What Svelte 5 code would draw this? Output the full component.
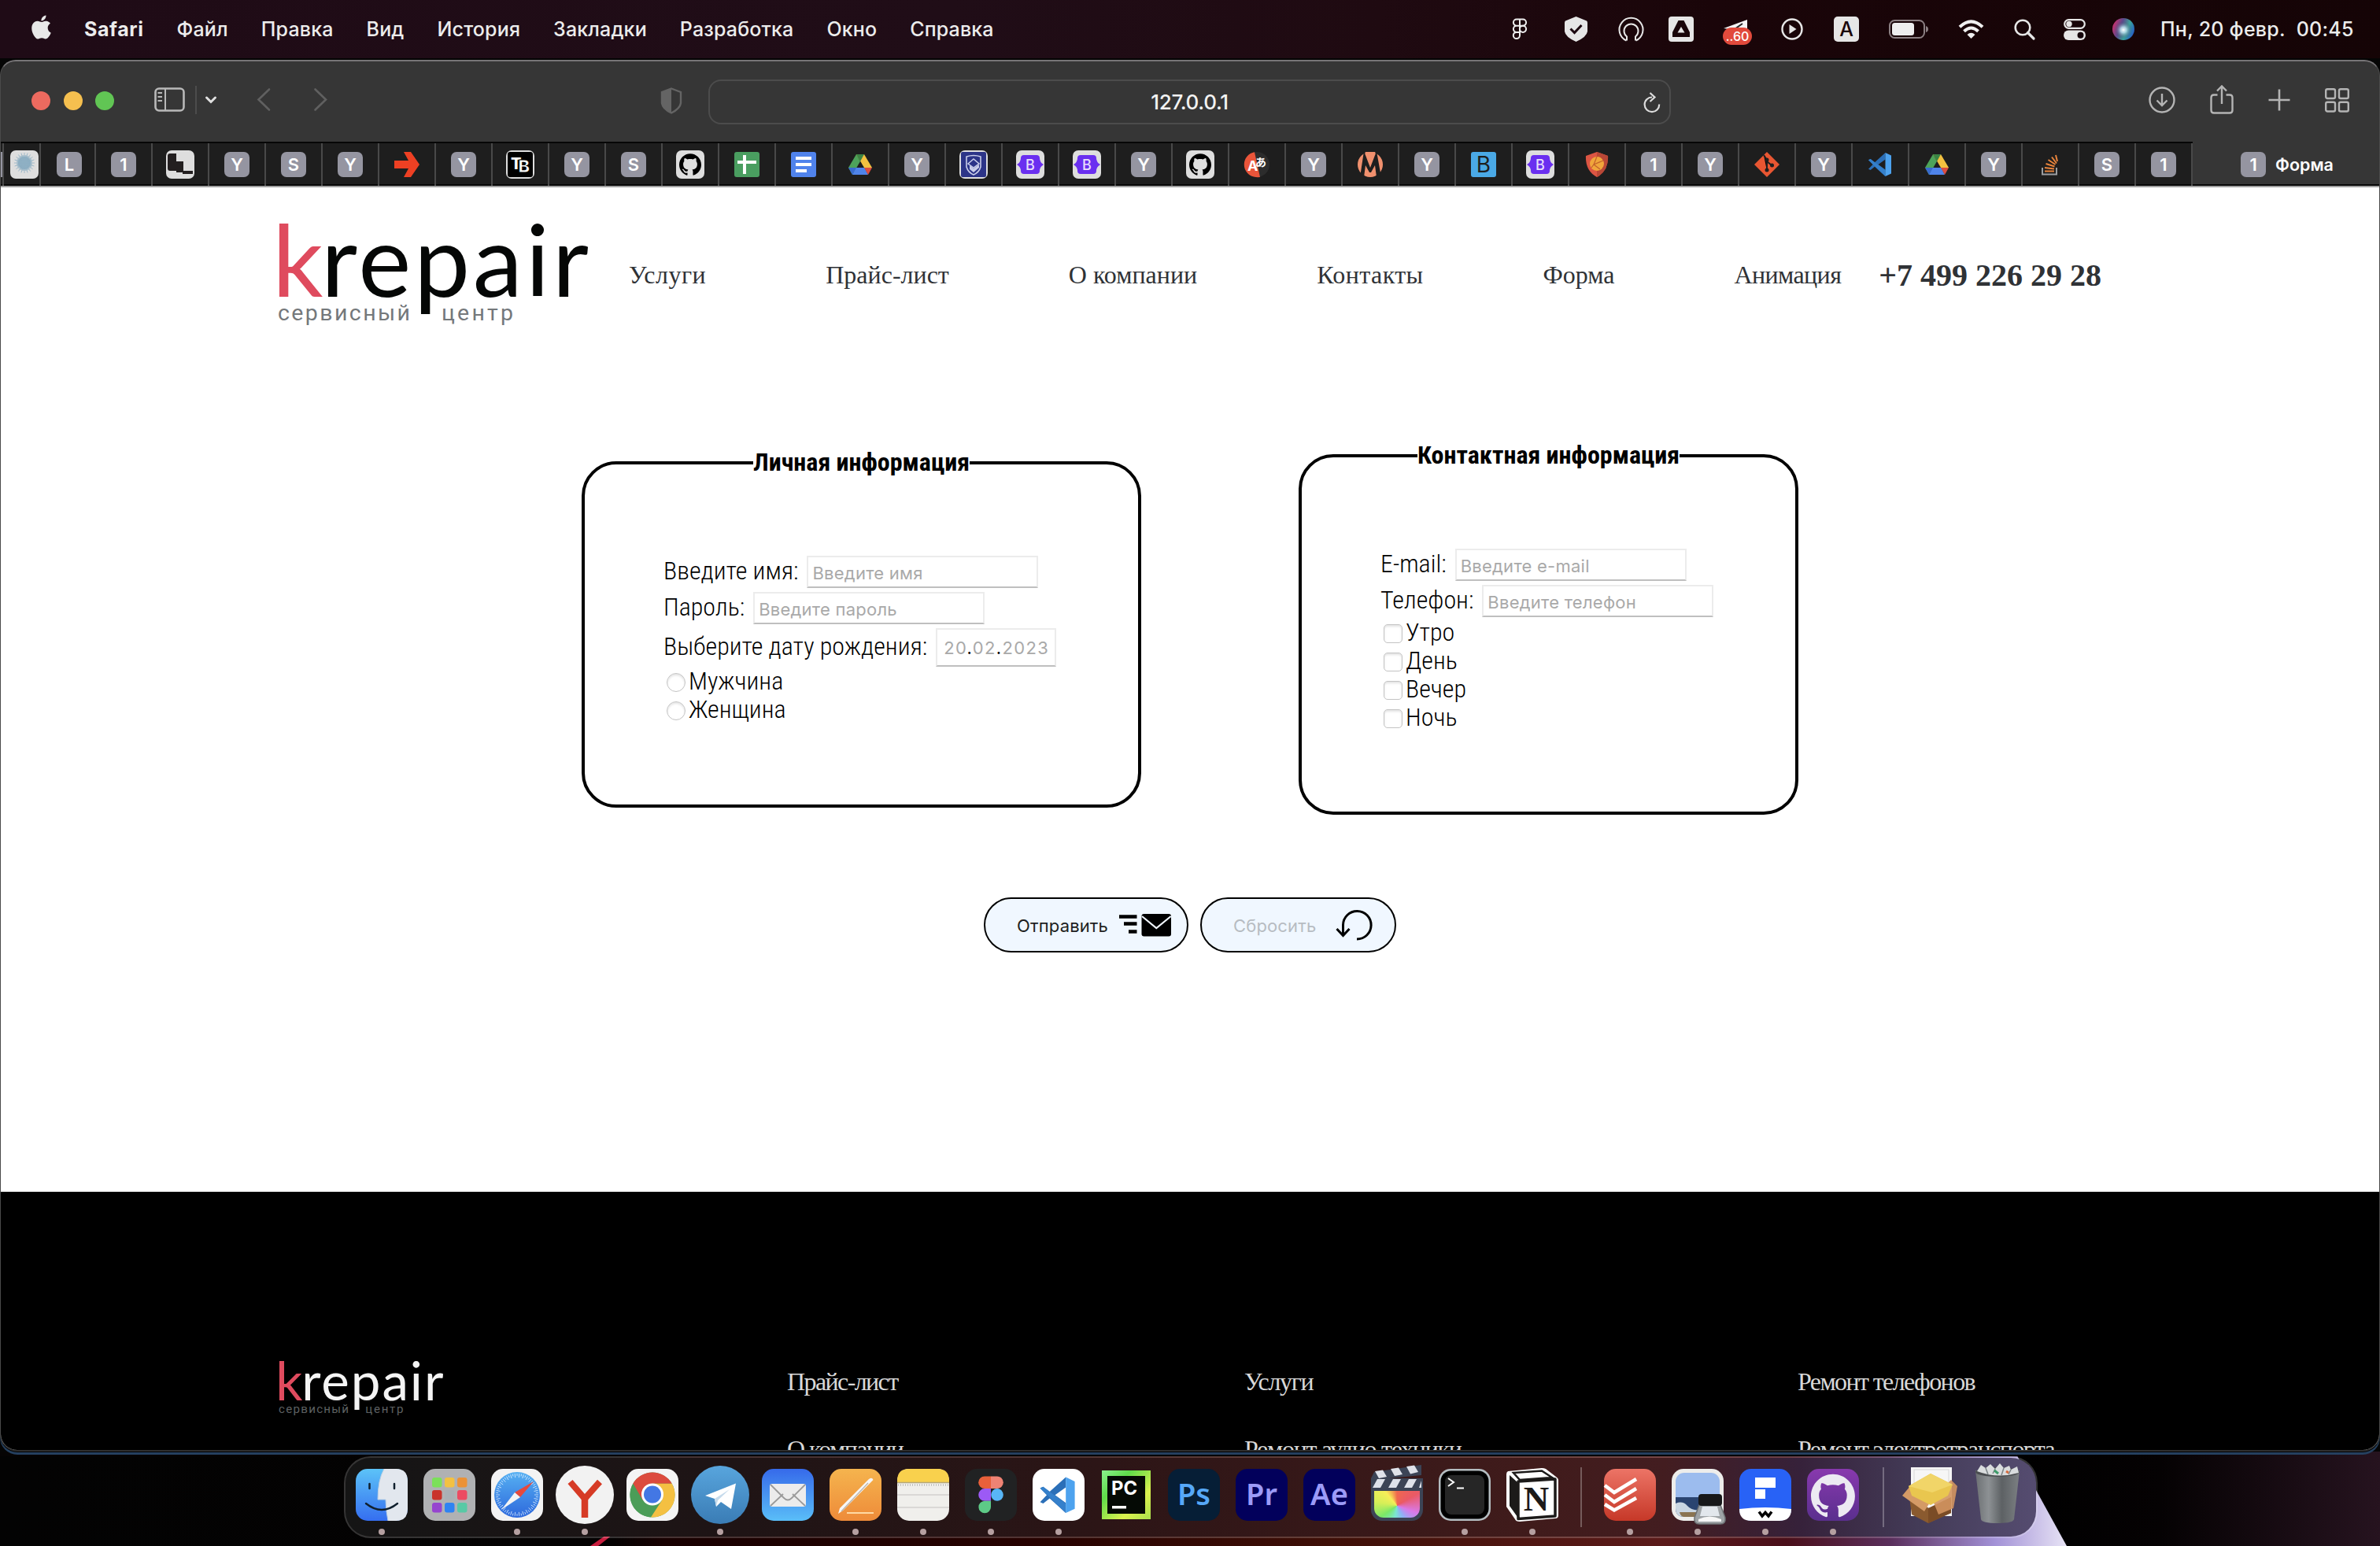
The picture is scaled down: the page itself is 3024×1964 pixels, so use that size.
<script>
  const menus = ['Файл', 'Правка', 'Вид', 'История', 'Закладки', 'Разработка', 'Окно', 'Справка'];
  const statusIcons = ['figma', 'shield', 'pod', 'prism', 'plane', 'play', 'layout', 'battery', 'wifi', 'search', 'control', 'siri'];
  const tabs = [
    '1', 'stairs', 'Y', 'S', 'Y', 'arrow', 'Y', 'tb', 'Y', 'S', 'github', 'sheets', 'docs', 'drive', 'Y', 'crest',
    'bootstrap', 'bootstrap', 'Y', 'github', 'translate', 'Y', 'metro', 'Y', 'bsquare', 'bootstrap', 'guard', '1', 'Y',
    'git', 'Y', 'vscode', 'drive', 'Y', 'stack', 'S', '1'
  ];
  const nav = ['Услуги', 'Прайс-лист', 'О компании', 'Контакты', 'Форма', 'Анимация'];
  const times = ['Утро', 'День', 'Вечер', 'Ночь'];
  const footer = [
    ['Прайс-лист', 'О компании'],
    ['Услуги', 'Ремонт аудио техники'],
    ['Ремонт телефонов', 'Ремонт электротранспорта']
  ];
  const dock = [
    ['finder', true], ['launchpad', false], ['safari', true], ['yandex', true], ['chrome', false], ['telegram', true],
    ['mail', false], ['pages', true], ['notes', true], ['figma', true], ['vscode', true], ['pycharm', false],
    ['ps', false], ['pr', false], ['ae', false], ['clapper', false], ['terminal', true], ['notion', true],
    ['sep', false], ['todoist', true], ['preview', true], ['fw', true], ['github', true],
    ['sep', false], ['box', false], ['trash', false]
  ];
  const adobe = {
    ps: { bg: '#061e36', fg: '#56a8f8', t: 'Ps' },
    pr: { bg: '#02005b', fg: '#9c9bf7', t: 'Pr' },
    ae: { bg: '#02005b', fg: '#9c9bf7', t: 'Ae' }
  };
  const pads = ['#7be05a', '#f3c142', '#ec9236', '#c9332b', '#a9b0b5', '#ec4a62', '#9645cf', '#2f83f2', '#58c9a5'];
  const ticks = Array.from({ length: 60 }, (_, i) => i * 6);
  const catPath =
    'M12 .297c-6.63 0-12 5.373-12 12 0 5.303 3.438 9.8 8.205 11.385.6.113.82-.258.82-.577 0-.285-.01-1.04-.015-2.04-3.338.724-4.042-1.61-4.042-1.61C4.422 18.07 3.633 17.7 3.633 17.7c-1.087-.744.084-.729.084-.729 1.205.084 1.838 1.236 1.838 1.236 1.07 1.835 2.809 1.305 3.495.998.108-.776.417-1.305.76-1.605-2.665-.3-5.466-1.332-5.466-5.93 0-1.31.465-2.38 1.235-3.22-.135-.303-.54-1.523.105-3.176 0 0 1.005-.322 3.3 1.23.96-.267 1.98-.399 3-.405 1.02.006 2.04.138 3 .405 2.28-1.552 3.285-1.23 3.285-1.23.645 1.653.24 2.873.12 3.176.765.84 1.23 1.91 1.23 3.22 0 4.61-2.805 5.625-5.475 5.92.42.36.81 1.096.81 2.22 0 1.606-.015 2.896-.015 3.286 0 .315.21.69.825.57C20.565 22.092 24 17.592 24 12.297c0-6.627-5.373-12-12-12';
</script>

{#snippet logo(dark)}
  <svg class="logo" class:dark viewBox="0 0 394 132">
    <text class="brand" y="96" font-size="127"><tspan class="k" x="-8" textLength="60">k</tspan><tspan x="54" textLength="340">repair</tspan></text>
    <g class="tag" font-size="28.500">
      <text x="-1" y="126" textLength="168">сервисный</text>
      <text x="207" y="126" textLength="91">центр</text>
    </g>
  </svg>
{/snippet}

{#snippet vs()}
  <path d="M22.5 1 9 13.2 3.6 9 1 10.2 6.6 16 1 21.8 3.6 23 9 18.8 22.5 31 Z M22.5 9.5V22.5L13.5 16Z" fill="#2b6fb8" fill-rule="evenodd" />
  <path d="M1 10.2 3.6 9 22.5 23.2V31Z" fill="#3580cb" />
  <path d="M22.5 1 30 4.6V27.4L22.5 31Z" fill="#4da2ee" />
{/snippet}

{#snippet favicon(name)}
  {#if name.length === 1}
    <span class="letter">{name}</span>
  {:else}
    <svg class="fav" viewBox="0 0 32 32">
      {#if ['stairs', 'github', 'bootstrap', 'crest', 'tb', 'burst'].includes(name)}
        <rect x="-2" y="-2" width="36" height="36" rx="7" fill="#dedede" />
      {/if}
      {#if name === 'stairs'}
        <path d="M0 5q0-3 3-3h8v10h9v14h-9v-2h-8q-3 0-3-3z" fill="#231f20" />
        <rect x="19" y="24" width="13" height="4" fill="#231f20" />
      {:else if name === 'burst'}
        <circle cx="16" cy="14" r="8" fill="#86a8bd" />
        {#each ticks as t}
          <path d="M16 14V{t % 18 === 0 ? 1 : 4}" stroke="#8fb0c4" stroke-width=".8" transform="rotate({t} 16 14)" />
        {/each}
      {:else if name === 'arrow'}
        <path d="M12 0 21 0 32 16 21 32H12L18 21H0V11H18Z" fill="#ee4023" />
      {:else if name === 'tb'}
        <rect width="32" height="32" rx="3" fill="#000" />
        <text x="4" y="22" font-size="20" font-weight="800" fill="#fff">T</text>
        <text x="13.500" y="26" font-size="22" font-weight="800" fill="#fff" stroke="#000" stroke-width=".8">B</text>
      {:else if name === 'github'}
        <g transform="translate(2 2) scale(1.167)"><path d={catPath} fill="#000" /></g>
      {:else if name === 'sheets'}
        <rect width="32" height="32" rx="3" fill="#4a9e60" />
        <path d="M4 13H28M13 4V28" stroke="#fff" stroke-width="4" />
      {:else if name === 'docs'}
        <rect width="32" height="32" rx="3" fill="#5083ec" />
        <path d="M6 8H26M6 16H26M6 24H20" stroke="#fff" stroke-width="4" />
      {:else if name === 'drive'}
        <path d="M11 3 16 12 6 29 1 20Z" fill="#4da35a" />
        <path d="M11 3H21L31 20H21Z" fill="#f4c140" />
        <path d="M11 3H21L16 12Z" fill="#3a8344" />
        <path d="M10.5 20H21.500L26 29H6Z" fill="#4f84ea" />
        <path d="M1 20H11L6 29Z" fill="#386bd0" />
        <path d="M21 20H31L26 29Z" fill="#dc4d40" />
      {:else if name === 'crest'}
        <rect width="32" height="32" rx="2" fill="#2c3488" />
        <path d="M7 6q9-3 18 0v13q-2 7-9 10q-7-3-9-10z" fill="none" stroke="#c9cdea" stroke-width="1.600" />
        <path d="M9 15l7-6 7 6-7 5z" fill="none" stroke="#c9cdea" stroke-width="1.500" />
        <path d="M11 17l5 4 7-5v4l-7 6-5-4z" fill="#c9cdea" />
      {:else if name === 'bootstrap'}
        <path d="M8 4H24q4 0 4 4 0 5 5 8-5 3-5 8 0 4-4 4H8q-4 0-4-4 0-5-5-8 5-3 5-8 0-4 4-4Z" fill="#6a2ff0" />
        <text x="16" y="22.500" font-size="18" font-weight="500" fill="#e8defc" text-anchor="middle">B</text>
      {:else if name === 'translate'}
        <circle cx="16" cy="16" r="16" fill="#2c2c2c" />
        <path d="M13 .2 20 32Q16 32.500 12 31.500A16 16 0 0 1 13 .2Z" fill="#ea553a" />
        <text x="4" y="24" font-size="18" font-weight="700" fill="#fff">A</text>
        <text class="cjk" x="14" y="18" font-size="14" font-weight="700" fill="#fff">あ</text>
      {:else if name === 'metro'}
        <circle cx="16" cy="16" r="16" fill="#f0906e" />
        <path d="M8 -1 16 20 24 -1 30 32H24L22 17 17 26H15L10 17 8 32H3Z" fill="#1e1e1e" />
        <path d="M9.500 0H22.500L16 17Z" fill="#f0906e" />
      {:else if name === 'bsquare'}
        <rect width="32" height="32" rx="3" fill="#4aa9e6" />
        <text x="16" y="26" font-size="28" fill="#1e1e1e" text-anchor="middle">B</text>
      {:else if name === 'guard'}
        <path d="M16 0 30 5Q31 24 16 32Q1 24 2 5Z" fill="#dc5543" />
        <path d="M16 0 30 5Q31 24 16 32Z" fill="#b94736" />
        <circle cx="16" cy="15" r="9" fill="#f0a63b" />
        <path d="M16 6 12 16 20 22M12 16 24 11M9 20 12 16" stroke="#c2602a" stroke-width="1.200" fill="none" />
      {:else if name === 'git'}
        <path d="M16 0 32 16 16 32 0 16Z" fill="#e85632" />
        <path d="M12 4 16 10V24M16 12 22 17" stroke="#1e1e1e" stroke-width="2" />
        <circle cx="16" cy="10" r="2.500" fill="#1e1e1e" /><circle cx="16" cy="23" r="2.500" fill="#1e1e1e" /><circle cx="22.500" cy="17" r="2.500" fill="#1e1e1e" />
      {:else if name === 'vscode'}
        {@render vs()}
      {:else if name === 'stack'}
        <path d="M6 20V28.500H24V20" stroke="#9c9ea1" stroke-width="2" fill="none" />
        <path d="M9 24.500H21M9 20 21 21.500M10.500 15 21.500 18.500M13.500 10 22.500 16M18 6.500 24 14.500M23 4 25 12" stroke="#e8843c" stroke-width="2" />
      {/if}
    </svg>
  {/if}
{/snippet}

{#snippet status(name)}
  {#if name === 'figma'}
    <svg width="20" height="28" viewBox="0 0 20 28" fill="none" stroke="#eee" stroke-width="2">
      <path d="M10 1.500H6a4.100 4.100 0 0 0 0 8.200h4zM10 1.500h4a4.100 4.100 0 0 1 0 8.200h-4zM10 9.700H6a4.100 4.100 0 0 0 0 8.200h4zM10 17.900H6a4.100 4.100 0 1 0 4 4.200z" />
      <circle cx="14" cy="13.800" r="4.100" />
    </svg>
  {:else if name === 'shield'}
    <svg width="29" height="32" viewBox="0 0 29 32">
      <path d="M14.500 0 28 5.500Q29 6 29 8V19Q28 26 14.500 32Q1 26 0 19V8Q0 6 1 5.500Z" fill="#e6e6e6" />
      <path d="M7.500 15.500 12.500 20.500 21.500 11" stroke="#1c0810" stroke-width="3" fill="none" />
    </svg>
  {:else if name === 'pod'}
    <svg width="33" height="32" viewBox="0 0 33 32" fill="none" stroke="#e6e6e6" stroke-width="2">
      <path d="M10.500 30.500A15 15 0 1 1 22.500 30.500M11 30.500V25.500A9 9 0 1 1 22 25.500V30.500" />
    </svg>
  {:else if name === 'prism'}
    <svg width="32" height="32" viewBox="0 0 32 32">
      <rect width="32" height="32" rx="4" fill="#e6e6e6" />
      <path d="M12.500 5H19.500L27 20V26H5V20Z" fill="#190509" /><path d="M16 13 20.500 20.500H11.500Z" fill="#e6e6e6" />
    </svg>
  {:else if name === 'plane'}
    <svg width="38" height="34" viewBox="0 0 38 34">
      <path d="M31 1V16L1 12Z" fill="#f4f4f4" /><path d="M25 6 12 15" stroke="#222" stroke-width="2" />
      <rect x="0" y="11" width="37" height="22" rx="11" fill="#e14a3c" />
      <text x="18.500" y="28" font-size="16" fill="#fff" text-anchor="middle">..60</text>
    </svg>
  {:else if name === 'play'}
    <svg width="28" height="28" viewBox="0 0 28 28">
      <circle cx="14" cy="14" r="12.500" fill="none" stroke="#e6e6e6" stroke-width="2.400" /><path d="M10.500 8 19.500 14 10.500 20Z" fill="#e6e6e6" />
    </svg>
  {:else if name === 'layout'}
    <svg width="32" height="32" viewBox="0 0 32 32">
      <rect width="32" height="32" rx="5" fill="#e6e6e6" /><text x="16" y="25" font-size="25" fill="#1a060a" text-anchor="middle">A</text>
    </svg>
  {:else if name === 'battery'}
    <svg width="51" height="24" viewBox="0 0 51 24">
      <rect x="1" y="1" width="44" height="22" rx="6.500" fill="none" stroke="#8b7f82" stroke-width="2" />
      <rect x="4" y="4" width="28" height="16" rx="3.500" fill="#eee" /><path d="M47 8Q50 9 50 12T47 16Z" fill="#8b7f82" />
    </svg>
  {:else if name === 'wifi'}
    <svg width="33" height="25" viewBox="0 0 33 25" fill="none" stroke="#f0f0f0" stroke-width="4">
      <path d="M2 9.200Q16.500-4.500 31 9.200" /><path d="M7.500 14.700Q16.500 6.300 25.500 14.700" /><path d="M16.500 24 11.500 19Q16.500 14.500 21.500 19Z" fill="#f0f0f0" stroke="none" />
    </svg>
  {:else if name === 'search'}
    <svg width="27" height="27" viewBox="0 0 27 27" fill="none" stroke="#e6e6e6" stroke-width="2.600">
      <circle cx="11" cy="11" r="9.300" /><path d="M17.500 17.500 25 25" stroke-width="3.200" stroke-linecap="round" />
    </svg>
  {:else if name === 'control'}
    <svg width="28" height="27" viewBox="0 0 28 27">
      <rect x="1.200" y="1.200" width="25.600" height="10.600" rx="5.300" fill="none" stroke="#e6e6e6" stroke-width="2.200" /><circle cx="7" cy="6.500" r="3.700" fill="#e6e6e6" />
      <rect x="0" y="14.500" width="28" height="12.500" rx="6.200" fill="#e6e6e6" /><circle cx="21.500" cy="20.700" r="4" fill="#14040a" />
    </svg>
  {:else if name === 'siri'}
    <svg width="28" height="28" viewBox="0 0 28 28">
      <defs>
        <linearGradient id="siri" x1="0" y1=".3" x2="1" y2=".7"><stop offset="0" stop-color="#d0306c" /><stop offset=".35" stop-color="#5b4b8c" /><stop offset=".65" stop-color="#3aa39a" /><stop offset="1" stop-color="#2456c8" /></linearGradient>
        <radialGradient id="glow"><stop offset="0" stop-color="#fff" /><stop offset=".35" stop-color="#bfe4f2" stop-opacity=".8" /><stop offset="1" stop-color="#3a3a5c" stop-opacity="0" /></radialGradient>
      </defs>
      <circle cx="14" cy="14" r="14" fill="url(#siri)" /><circle cx="14" cy="15" r="11" fill="url(#glow)" />
    </svg>
  {/if}
{/snippet}

{#snippet app(name)}
  <svg class="app" viewBox="0 0 66 66">
    {#if name === 'finder'}
      <rect width="66" height="66" rx="15" fill="url(#finder)" />
      <path d="M36 0H51Q66 0 66 15V51Q66 66 51 66H41Q38 52 38 39H28Q28 14 36 0Z" fill="#e2e7ee" />
      <path d="M36 0Q28 14 28 39H38Q38 52 41 66" fill="none" stroke="#bcd0e4" stroke-width="1" />
      <path d="M17.500 19V25M49 19V25" stroke="#10202e" stroke-width="2.500" stroke-linecap="round" />
      <path d="M13 44Q33 60 53 44" fill="none" stroke="#10202e" stroke-width="2.400" stroke-linecap="round" />
    {:else if name === 'launchpad'}
      <rect width="66" height="66" rx="15" fill="#b0b1b3" />
      {#each pads as c, i}
        <rect x={11 + (i % 3) * 16} y={11 + Math.floor(i / 3) * 16} width="12.500" height="12.500" rx="3" fill={c} />
      {/each}
    {:else if name === 'safari'}
      <rect width="66" height="66" rx="15" fill="#f3f3f3" />
      <circle cx="33" cy="33" r="29" fill="url(#sky)" />
      {#each ticks as t}
        <path d="M33 6V{t % 12 === 0 ? 9 : 11}" stroke="#d8ecff" stroke-width=".8" transform="rotate({t} 33 33)" />
      {/each}
      <path d="M54 16 37 36 30 30Z" fill="#e6493d" /><path d="M13 52 30 30 37 36Z" fill="#f4f4f4" />
    {:else if name === 'yandex'}
      <circle cx="33" cy="33" r="37" fill="#f2f2f2" />
      <path d="M14.500 16.500 33 38 52 16.500" fill="none" stroke="#d63b26" stroke-width="8" /><path d="M33 35V62" stroke="#d63b26" stroke-width="8.500" />
    {:else if name === 'chrome'}
      <rect width="66" height="66" rx="15" fill="#f4f4f4" />
      <circle cx="33" cy="33" r="28.500" fill="#4b9d58" />
      <path d="M8.300 18.700A28.500 28.500 0 0 1 57.700 18.700H33L20.500 40Z" fill="#dc4b3e" />
      <path d="M57.700 18.700A28.500 28.500 0 0 1 31 61.500L45 40 33 18.700Z" fill="#f4c042" />
      <path d="M8.300 18.700 20.600 40 31 61.500A28.500 28.500 0 0 1 8.300 18.700Z" fill="#4b9d58" />
      <circle cx="33" cy="32.500" r="14" fill="#fff" /><circle cx="33" cy="32.500" r="11" fill="#4377e4" />
    {:else if name === 'telegram'}
      <circle cx="33" cy="33" r="37" fill="url(#tg)" />
      <path d="M14 34 53 18.500 47 51 34 42 28 48 26 38Z" fill="#fff" /><path d="M26 38 45 26 30 40 28 48Z" fill="#c6dbec" />
    {:else if name === 'mail'}
      <rect width="66" height="66" rx="15" fill="url(#mail)" />
      <rect x="10" y="19" width="46" height="29" rx="3" fill="#ececec" />
      <path d="M11 47 27 32M55 47 39 32M11 20 28 37Q33 42 38 37L55 20" fill="none" stroke="#9a9a9a" stroke-width="1.800" />
    {:else if name === 'pages'}
      <rect width="66" height="66" rx="15" fill="url(#orange)" />
      <path d="M22 56H56" stroke="#ffd9a4" stroke-width="2" />
      <path d="M50 13Q54 10 55.500 14L17 53 11 57 13 50Z" fill="#f7f7f7" /><path d="M49 18 15 54" stroke="#b9b2aa" stroke-width="1.200" />
    {:else if name === 'notes'}
      <rect width="66" height="66" rx="15" fill="#f0efec" />
      <path d="M0 17V15Q0 0 15 0H51Q66 0 66 15V17Z" fill="#f9d14d" />
      <path d="M0 17.500H66" stroke="#b4a77c" stroke-width="1.500" /><path d="M1 20.500H65" stroke="#b0b0ae" stroke-width="2" stroke-dasharray="1 2" />
      <path d="M0 33H66M0 49H66" stroke="#d2d1ce" stroke-width="1.400" />
    {:else if name === 'figma'}
      <rect width="66" height="66" rx="15" fill="#212223" />
      <path d="M33 9.500H25a7.800 7.800 0 0 0 0 15.600h8z" fill="#e9603a" /><path d="M33 9.500h8a7.800 7.800 0 0 1 0 15.600h-8z" fill="#ef8374" />
      <path d="M33 25.100H25a7.800 7.800 0 0 0 0 15.600h8z" fill="#9c5af5" /><circle cx="41" cy="32.900" r="7.800" fill="#58b6f7" />
      <path d="M33 40.700H25a7.800 7.800 0 1 0 8 7.800z" fill="#5dca87" />
    {:else if name === 'vscode'}
      <rect width="66" height="66" rx="15" fill="#fff" /><g transform="translate(8 9) scale(1.520)">{@render vs()}</g>
    {:else if name === 'pycharm'}
      <rect x="2" y="2" width="62" height="62" fill="url(#pc)" /><rect x="9" y="9" width="48" height="48" fill="#050a05" />
      <text x="14" y="33" font-size="24" font-weight="700" fill="#fff" textLength="33" lengthAdjust="spacingAndGlyphs">PC</text><rect x="15" y="47" width="18" height="3.500" fill="#fff" />
    {:else if adobe[name]}
      <rect width="66" height="66" rx="15" fill={adobe[name].bg} />
      <text class="adobe" x="33" y="46" font-size="38" font-weight="600" fill={adobe[name].fg} text-anchor="middle">{adobe[name].t}</text>
    {:else if name === 'clapper'}
      <rect y="12" width="66" height="54" rx="14" fill="#3c4456" /><rect y="12" width="66" height="14" fill="#3c4456" />
      <path d="M0 12 4 4 64-5V8L2 14Z" fill="#3c4456" />
      <path d="M5 3 15 1.500 20 10 10 12ZM25 0 35-1.500 40 7 30 9ZM45-3 55-4.500 60 4 50 6.500ZM8 13H18L12 24H2ZM28 13H38L32 24H22ZM48 13H58L52 24H42ZM64 15V24H61Z" fill="#dfe2ea" />
      <foreignObject x="4" y="28" width="58" height="34"><div class="wheel"></div></foreignObject>
    {:else if name === 'terminal'}
      <rect width="66" height="66" rx="15" fill="#b4bcc0" /><rect x="2.500" y="2.500" width="61" height="61" rx="13" fill="#000" /><rect x="8" y="8" width="50" height="50" rx="8" fill="#262626" />
      <path d="M12 12 19 17 12 22" stroke="#fff" stroke-width="2" fill="none" /><path d="M23 24.500H32" stroke="#fff" stroke-width="2" />
    {:else if name === 'notion'}
      <path d="M2 3Q0 4 0 7V48L11 64Q12 67 17 67L62 63Q66 63 66 59V14Q66 12 63 10L50 0Q48-1 45-1Z" fill="#fff" />
      <path d="M9 5 45 2.500 58 11 17 14Z" fill="#fff" stroke="#1c1a19" stroke-width="2.500" />
      <path d="M4 8 14 17V61L4 47Z" fill="#1c1a19" /><path d="M15 16 62 13V60L15 63.500Z" fill="#fff" stroke="#1c1a19" stroke-width="3.500" stroke-linejoin="round" />
      <text class="serif" x="38" y="53" font-size="45" font-weight="700" fill="#1c1a19" text-anchor="middle">N</text>
    {:else if name === 'todoist'}
      <rect width="66" height="66" rx="15" fill="url(#todo)" />
      <path d="M1 21 13 30 41 13M1 33 13 42 41 25M1 45 13 52.500 41 37" stroke="#fff" stroke-width="4.500" fill="none" />
    {:else if name === 'preview'}
      <rect width="66" height="66" rx="15" fill="#ededeb" /><rect x="5" y="5" width="56" height="56" rx="11" fill="#9cbcee" />
      <path d="M5 36H61V50Q61 61 50 61H16Q5 61 5 50Z" fill="#2a4470" /><path d="M5 44Q14 40 20 47T38 52V61H16Q5 61 5 50Z" fill="#c9d6e2" /><path d="M10 55H34V61H15Q11 60 10 55Z" fill="#8a7452" />
      <path d="M35 46 29 62Q28 70 35 70H62Q69 70 68 62L62 46Z" fill="#9ea3a6" stroke="#6d7174" stroke-width="1.500" /><path d="M39 48 36 60H61L58 48Z" fill="#e2e7ec" /><path d="M34 64Q48 57 63 64V67H34Z" fill="#f6f6f6" />
      <rect x="34" y="32" width="30" height="15" rx="4" fill="#17181a" />
    {:else if name === 'fw'}
      <rect width="66" height="66" rx="15" fill="#2862f6" />
      <path d="M0 51Q33 47 66 51Q66 66 51 66H15Q0 66 0 51Z" fill="#fff" /><path d="M20 11H46V24H33V38H20V26H33V24H20Z" fill="#fff" /><path d="M20 24.700H33" stroke="#2862f6" stroke-width="1.500" />
      <path d="M25 54.500 29 60 33 55.500 37 60 41 54.500" stroke="#000" stroke-width="3.500" fill="none" />
    {:else if name === 'github'}
      <rect width="66" height="66" rx="15" fill="url(#gh)" /><g transform="translate(5 6) scale(2.330)"><path d={catPath} fill="#eceaf2" /></g>
    {:else if name === 'box'}
      <rect x="9" y="-2" width="52" height="62" fill="#f6f6f6" /><rect x="13" y="1" width="44" height="40" fill="none" stroke="#d8d8d8" />
      <path d="M7 36 32 50 60 36V56L31 69 10 58Z" fill="#8a5a2f" /><path d="M31 50V69L60 56V36Z" fill="#7a4c26" />
      <path d="M-2 34 8 22 36 38 26 54Z" fill="#d49a66" /><path d="M36 38 60 14 68 22 63 50 44 58Z" fill="#d39560" opacity=".9" />
      <path d="M6 22 34 6 62 20 56 34 34 46 10 34Z" fill="#e9c64f" /><path d="M34 6 62 20 36 30 6 22Z" fill="#f1d568" />
    {:else if name === 'trash'}
      <path d="M5 2 61 2 54 64Q53 69 33 69T12 64Z" fill="url(#bin)" />
      <ellipse cx="33" cy="4" rx="28" ry="6" fill="#4a4d50" />
      <path d="M7 3 12-5 18-1 24-6 30 0 36-7 41-1 48-4 50 1 58-3 60 5Q33 13 7 3Z" fill="#d9dcdd" />
      <path d="M18-1 21 7M30 0 27 6M41-1 38 8M50 1 47 7" stroke="#7b8386" stroke-width="1.500" /><path d="M29 2 34 6" stroke="#3f9b6a" stroke-width="3" /><path d="M44 3 47 5" stroke="#d66a3c" stroke-width="3" />
    {/if}
  </svg>
{/snippet}

<div class="desktop">
  <svg class="defs" width="0" height="0">
    <defs>
      <linearGradient id="finder" x2="0" y2="1"><stop offset="0" stop-color="#5cc3f8" /><stop offset="1" stop-color="#356ef0" /></linearGradient>
      <linearGradient id="sky" x2="0" y2="1"><stop offset="0" stop-color="#56b0f2" /><stop offset="1" stop-color="#2d68dc" /></linearGradient>
      <linearGradient id="tg" x2="0" y2="1"><stop offset="0" stop-color="#58a5dd" /><stop offset="1" stop-color="#3a7cb5" /></linearGradient>
      <linearGradient id="mail" x2="0" y2="1"><stop offset="0" stop-color="#366aea" /><stop offset="1" stop-color="#5abef8" /></linearGradient>
      <linearGradient id="orange" x2="0" y2="1"><stop offset="0" stop-color="#f5b44e" /><stop offset="1" stop-color="#ee8b39" /></linearGradient>
      <linearGradient id="pc" x2="1" y2="1"><stop offset="0" stop-color="#8af08f" /><stop offset=".3" stop-color="#5fdc4a" /><stop offset=".7" stop-color="#dcf24e" /><stop offset="1" stop-color="#a9e04c" /></linearGradient>
      <linearGradient id="todo" x2="0" y2="1"><stop offset="0" stop-color="#ec7466" /><stop offset="1" stop-color="#c63828" /></linearGradient>
      <linearGradient id="gh" x2="0" y2="1"><stop offset="0" stop-color="#8839ae" /><stop offset="1" stop-color="#5a2f8e" /></linearGradient>
      <linearGradient id="bin"><stop offset="0" stop-color="#6c7073" /><stop offset=".3" stop-color="#8d9194" /><stop offset=".6" stop-color="#5d6164" /><stop offset="1" stop-color="#7c8083" /></linearGradient>
    </defs>
  </svg>

  <header class="menubar">
    <svg class="apple" viewBox="2 0 20 24"><path fill="#e8e8e8" d="M12.152 6.896c-.948 0-2.415-1.078-3.960-1.040-2.040.027-3.910 1.183-4.961 3.014-2.117 3.675-.546 9.103 1.519 12.090 1.013 1.454 2.208 3.090 3.792 3.039 1.520-.065 2.090-.987 3.935-.987 1.831 0 2.350.987 3.960.948 1.637-.026 2.676-1.480 3.676-2.948 1.156-1.688 1.636-3.325 1.662-3.415-.039-.013-3.182-1.221-3.220-4.857-.026-3.040 2.480-4.494 2.597-4.559-1.429-2.090-3.623-2.324-4.390-2.376-2-.156-3.675 1.090-4.610 1.090zM15.530 3.830c.843-1.012 1.400-2.427 1.245-3.830-1.207.052-2.662.805-3.532 1.818-.780.896-1.454 2.338-1.273 3.714 1.338.104 2.715-.688 3.559-1.701" /></svg>
    <nav class="menus">
      <b>Safari</b>
      {#each menus as m}<span>{m}</span>{/each}
    </nav>
    <div class="status">
      {#each statusIcons as s}<span class="cell {s}">{@render status(s)}</span>{/each}
      <time>Пн, 20 февр.&nbsp; 00:45</time>
    </div>
  </header>

  <main class="window">
    <div class="toolbar">
      <div class="lights"><i class="red"></i><i class="yellow"></i><i class="green"></i></div>
      <svg class="left-tools" width="230" height="40" viewBox="0 0 230 40" fill="none">
        <rect x="1.500" y="5.500" width="36" height="28" rx="4.500" stroke="#b9b9b9" stroke-width="2.600" />
        <path d="M14 5V34M4.500 11H10M4.500 16H10M4.500 21H10" stroke="#b9b9b9" stroke-width="2" />
        <path d="M53 2V38" stroke="#4c4c4c" stroke-width="2" />
        <path d="M66.500 17 72 22.500 77.500 17" stroke="#e0e0e0" stroke-width="3" stroke-linecap="round" />
        <path d="M146 6.500 132.500 19.500 146 32.500M204.500 6.500 218 19.500 204.500 32.500" stroke="#606060" stroke-width="2.600" stroke-linecap="round" />
      </svg>
      <svg class="privacy" width="28" height="34" viewBox="0 0 28 34"><path d="M14 1.500 26 6V20Q25 27 14 32.500Q3 27 2 20V6Z" fill="none" stroke="#646464" stroke-width="2.400" /><path d="M14 1.500V32.500Q3 27 2 20V6Z" fill="#646464" /></svg>
      <div class="address">
        <span>127.0.0.1</span>
        <svg class="reload" width="22" height="26" viewBox="0 0 22 26" fill="none" stroke="#dcdcdc" stroke-width="2.200"><path d="M11 6.500A9.300 9.300 0 1 0 20.200 15.500M8.500 1 14.500 6.600 8.500 12" /></svg>
      </div>
      <div class="right-tools">
        <svg width="34" height="38" viewBox="0 0 34 38" fill="none" stroke="#b4b4b4" stroke-width="2.400"><circle cx="17" cy="20" r="15.500" /><path d="M17 12V27M10.500 20.500 17 27 23.500 20.500" /></svg>
        <svg width="30" height="38" viewBox="0 0 30 38" fill="none" stroke="#b4b4b4" stroke-width="2.400"><path d="M9.500 13.500H5Q1.500 13.500 1.500 17V33Q1.500 36.500 5 36.500H25Q28.500 36.500 28.500 33V17Q28.500 13.500 25 13.500H20.500M15 25V2.500M9 8.500 15 2.500 21 8.500" /></svg>
        <svg width="28" height="38" viewBox="0 0 28 38" stroke="#b4b4b4" stroke-width="2.600"><path d="M14 6.500V33.500M.5 20H27.500" /></svg>
        <svg width="31" height="38" viewBox="0 0 31 38" fill="none" stroke="#b4b4b4" stroke-width="2.400"><rect x="1.200" y="6.200" width="11.800" height="11.800" rx="2" /><rect x="18" y="6.200" width="11.800" height="11.800" rx="2" /><rect x="1.200" y="22.700" width="11.800" height="11.800" rx="2" /><rect x="18" y="22.700" width="11.800" height="11.800" rx="2" /></svg>
      </div>
    </div>

    <div class="tabs">
      <div class="tab sliver"></div>
      <div class="tab burst">{@render favicon('burst')}</div>
      <div class="tab second">{@render favicon('L')}</div>
      {#each tabs as t}<div class="tab">{@render favicon(t)}</div>{/each}
      <div class="tab active">{@render favicon('1')}<span>Форма</span></div>
    </div>

    <section class="page">
      <div class="head">
        {@render logo(false)}
        <nav>{#each nav as n}<a href="#top">{n}</a>{/each}</nav>
        <strong>+7 499 226 29 28</strong>
      </div>

      <form>
        <div class="sets">
          <fieldset class="personal">
            <legend>Личная информация</legend>
            <div class="row"><label for="name">Введите имя:</label><input id="name" placeholder="Введите имя" /></div>
            <div class="row"><label for="pass">Пароль:</label><input id="pass" placeholder="Введите пароль" /></div>
            <div class="row date"><label for="date">Выберите дату рождения:</label><output id="date">20<b>.</b>02<b>.</b>2023</output></div>
            <div class="pick"><input type="radio" name="sex" id="m" /><label for="m">Мужчина</label></div>
            <div class="pick"><input type="radio" name="sex" id="f" /><label for="f">Женщина</label></div>
          </fieldset>
          <fieldset class="contact">
            <legend>Контактная информация</legend>
            <div class="row"><label for="mail-in">E-mail:</label><input id="mail-in" placeholder="Введите e-mail" /></div>
            <div class="row tel"><label for="tel">Телефон:</label><input id="tel" placeholder="Введите телефон" /></div>
            {#each times as t}
              <div class="pick"><input type="checkbox" id={t} /><label for={t}>{t}</label></div>
            {/each}
          </fieldset>
        </div>
        <div class="buttons">
          <button class="send" type="button">
            <span>Отправить</span>
            <svg width="67" height="30" viewBox="0 0 67 30"><path d="M0 4.500H22.500M6 13.500H22.500M12 23.500H22.500" stroke="#000" stroke-width="4.400" /><rect x="28.500" y="1" width="37.500" height="28.500" rx="3" fill="#000" /><path d="M29 4 47.300 19 65.700 4" stroke="#f1f7ff" stroke-width="2.200" fill="none" /></svg>
          </button>
          <button class="reset" type="button">
            <span>Сбросить</span>
            <svg width="46" height="40" viewBox="0 0 46 40" fill="none" stroke="#000" stroke-width="3"><path d="M27 38A17.800 17.800 0 1 0 9.500 20V33.500M1.500 25 9.500 33.500 17.500 25" /></svg>
          </button>
        </div>
      </form>

      <footer>
        {@render logo(true)}
        {#each footer as col}
          <ul>{#each col as l}<li>{l}</li>{/each}</ul>
        {/each}
      </footer>
    </section>
  </main>

  <svg class="wallpaper" viewBox="0 0 3024 116" preserveAspectRatio="none">
    <defs>
      <linearGradient id="wall" gradientUnits="userSpaceOnUse" x1="0" x2="2640"><stop offset="0" stop-color="#030303" /><stop offset=".295" stop-color="#040202" /><stop offset=".32" stop-color="#180000" /><stop offset=".5" stop-color="#270200" /><stop offset=".65" stop-color="#401008" /><stop offset=".8" stop-color="#5b1b1a" /><stop offset=".86" stop-color="#4a0f1a" /><stop offset=".91" stop-color="#5a2f5c" /><stop offset=".96" stop-color="#a291d6" /><stop offset="1" stop-color="#f2f0fa" /></linearGradient>
      <linearGradient id="dusk"><stop offset="0" stop-color="#000" /><stop offset=".4" stop-color="#050203" /><stop offset="1" stop-color="#26131f" /></linearGradient>
    </defs>
    <rect width="3024" height="116" fill="url(#wall)" />
    <path d="M2560 0H3024V116H2626Z" fill="url(#dusk)" />
    <path d="M0 0H2560L2564 6H0Z" fill="#060404" />
    <path d="M750 116 768 104H776L760 116Z" fill="#c81e3e" />
  </svg>

  <div class="dock">
    {#each dock as [name, running]}
      {#if name === 'sep'}
        <i class="sep"></i>
      {:else}
        <div class="slot" class:running>{@render app(name)}</div>
      {/if}
    {/each}
  </div>
</div>

<style>
  :global(body) { margin: 0; background: #000; }
  * { box-sizing: border-box; }
  svg { display: block; flex: none; overflow: visible; }
  .desktop {
    position: relative; display: flex; flex-direction: column; width: 3024px; height: 1964px; overflow: hidden;
    background: #050505; font-family: Inter, "Liberation Sans", sans-serif;
  }
  .defs { position: absolute; }

  .menubar {
    display: flex; align-items: center; height: 74px; flex: none; margin-bottom: 2px; padding-left: 40px; color: #ececec;
    background: linear-gradient(90deg, #1f0b16, #200d17 40%, #1f0a11 58%, #1a0509 72%, #150406 100%);
    font-size: 25px; font-weight: 500; line-height: 74px;
  }
  .apple { width: 25px; height: 31px; margin-top: -5px; }
  .menus { display: flex; gap: 42px; margin-left: 42px; letter-spacing: .15px; }
  .menus b { font-weight: 700; letter-spacing: .6px; }
  .status {
    display: grid; grid-template-columns: 67px 68px 64px 69px 74px 67px 70px 88px 71px 63px 62px 61px auto;
    align-items: center; margin-left: auto; margin-right: 33px; width: 1070px;
  }
  .status time { white-space: nowrap; letter-spacing: .25px; }
  .cell.plane { padding-top: 8px; }

  .window {
    display: flex; flex-direction: column; height: 1768px; flex: none; overflow: hidden; border-radius: 20px 20px 22px 22px;
    background: #363636; border: 2px solid #4a4a4a; border-top-color: #777577; border-bottom-color: #2f2f2f; border-left-width: 1px; border-right-width: 1px;
    box-shadow: 0 1px 0 #000, 0 4px 0 #25405f; position: relative; z-index: 1;
  }
  .toolbar { display: flex; align-items: center; height: 102px; flex: none; padding: 0 38px 0 39px; }
  .lights { display: flex; gap: 16.500px; width: 156px; margin-top: -2px; }
  .lights i { width: 24px; height: 24px; border-radius: 50%; }
  .red { background: #ed6a5f; }
  .yellow { background: #f5bf4f; }
  .green { background: #61c554; }
  .left-tools { margin-top: -4px; }
  .privacy { margin-left: 413px; margin-top: -2px; }
  .address {
    display: flex; align-items: center; justify-content: flex-end; width: 1223px; height: 57px; margin-left: 33px; margin-top: 1px;
    padding-right: 11px; border: 2px solid #4c4c4c; border-radius: 16px; color: #f2f2f2; font-size: 26px; font-weight: 500;
  }
  .address span { flex: 1; padding-left: 33px; text-align: center; letter-spacing: -.3px; }
  .right-tools { display: flex; justify-content: space-between; width: 255px; margin-left: auto; margin-top: -6px; }

  .tabs { display: flex; height: 58px; flex: none; background: #1e1e1e; border-top: 2px solid #060606; border-bottom: 2px solid #a2a2a2; }
  .tab { display: flex; align-items: center; justify-content: center; width: 72px; border-right: 2px solid #494949; box-shadow: inset 0 -2px #080808; }
  .sliver { width: 4px; background: linear-gradient(#1e1e1e 11px, #9595a1 11px 43px, #1e1e1e 43px); }
  .burst { width: 47px; padding-left: 7px; }
  .second { width: 70px; padding-left: 4px; }
  .active { flex: 1; gap: 12px; margin-top: -2px; padding: 2px 0 0 3px; border-right: 0; background: #363636; color: #fff; font-size: 21.500px; font-weight: 600; }
  .letter { display: grid; place-items: center; width: 32px; height: 32px; border-radius: 7px; background: #9595a1; color: #fff; font-size: 22px; font-weight: 600; }
  .fav { width: 32px; height: 32px; }
  .cjk { font-family: "Noto Sans CJK JP", sans-serif; }
  .serif { font-family: "Liberation Serif", serif; }
  .adobe { font-family: "Noto Sans", sans-serif; }

  .page { flex: 1; overflow: hidden; background: #fff; display: flex; flex-direction: column; }
  .head { display: flex; align-items: center; height: 262px; flex: none; padding: 0 353px 40px; color: #2f3236; font-family: "Liberation Serif", serif; }
  .head nav { display: flex; gap: 152px; margin-left: 51px; }
  .head a { color: inherit; text-decoration: none; font-size: 32px; white-space: nowrap; }
  .head a:nth-child(1) { letter-spacing: .5px; }
  .head a:nth-child(4) { letter-spacing: .4px; }
  .head a:nth-child(6) { letter-spacing: -.6px; }
  .head strong { margin-left: auto; font-size: 40px; white-space: nowrap; }
  .head .logo { margin-bottom: 4px; }
  .logo { width: 394px; height: 132px; }
  .brand { font-family: Lato, sans-serif; fill: #050706; }
  .k { fill: #df4b5e; }
  .tag { font-family: Roboto, sans-serif; fill: #74787b; }
  .dark .brand { fill: #f4f4f4; }
  .dark .k { fill: #df4b5e; }
  .dark .tag { fill: #5d6062; }

  form { display: flex; flex-direction: column; align-items: center; height: 1014px; flex: none; padding-top: 61px; font-family: "Roboto Condensed", Roboto, sans-serif; font-stretch: 75%; }
  .sets { display: flex; align-items: center; gap: 200px; height: 474px; }
  fieldset { margin: 0; padding: 100px; border: 4px solid #000; border-radius: 44px; color: #000; }
  .personal { width: 711px; padding-bottom: 101px; }
  .contact { width: 635px; }
  legend { margin: 0 auto; padding: 0; height: 36px; font-size: 32px; font-weight: 700; line-height: 35px; white-space: nowrap; }
  .row { display: flex; align-items: flex-start; gap: 11px; height: 46px; }
  label { font-size: 32px; font-weight: 300; line-height: 38px; white-space: nowrap; }
  .row input, output {
    width: 294px; height: 41px; flex: none; padding: 2px 5px 0; border: 2px solid #ececec; border-bottom-color: #bfbfbf; outline: 0; background: #fff;
    font: 400 22px/38px Inter, sans-serif; letter-spacing: .25px;
  }
  input::placeholder { color: #a9a9a9; opacity: 1; }
  .date { height: 51px; }
  .date label { line-height: 46px; }
  output { width: 153px; height: 49px; padding: 0 0 0 8px; line-height: 47px; letter-spacing: 1.350px; color: #a9a9a9; white-space: nowrap; }
  output b { color: #000; font-weight: 400; }
  .tel { height: 44px; }
  .pick { display: flex; align-items: flex-start; gap: 4px; height: 36px; padding-left: 4px; }
  .pick label { line-height: 32px; }
  .pick input { appearance: none; width: 24px; height: 24px; margin: 6px 0 0; border: 1.500px solid #c4c4c4; border-radius: 5px; background: #fff; box-shadow: inset 0 2px 3px #e3e3e3; }
  .pick input[type='radio'] { border-radius: 50%; }

  .buttons { display: flex; gap: 15px; margin-top: 105px; }
  button { display: flex; align-items: center; justify-content: space-between; height: 70px; border: 2px solid #000; border-radius: 35px; background: #f0f7ff; font: 400 22px/1 Inter, sans-serif; color: #1e1f21; }
  button span { padding-top: 2px; letter-spacing: .15px; }
  .send { width: 260px; padding: 0 19px 0 40px; }
  .reset { width: 249px; padding: 0 29px 0 40px; color: #b7bcc2; }

  footer { position: relative; display: grid; grid-template-columns: 646px 581px 703px 1fr; align-items: start; flex: 1; padding: 214px 0 0 353px; background: #000; }
  footer .logo { width: 210px; height: 70px; }
  ul { margin: 7px 0 0; padding: 0; list-style: none; color: #d8d8d8; font: 32px/40px "Liberation Serif", serif; letter-spacing: -1.600px; }
  ul:nth-of-type(2) { letter-spacing: -1.300px; }
  li { height: 86px; white-space: nowrap; }

  .wallpaper { width: 3024px; height: 120px; margin-top: 0; }
  .dock {
    position: absolute; left: 437px; top: 1850px; z-index: 2; display: flex; gap: 20px; width: 2152px; height: 104px; padding: 14px 0 0 13px;
    border: 2px solid rgba(255, 255, 255, .2); border-radius: 34px;
    background: linear-gradient(90deg, #151515, #1e1415 22%, #2c1516 45%, #401b1b 70%, #431d20 78%, #36213a 86%, #433b57 93%, #554c70) padding-box;
  }
  .slot { width: 66px; height: 84px; flex: none; display: flex; flex-direction: column; align-items: center; justify-content: space-between; }
  .slot.running::after { content: ''; width: 8px; height: 8px; border-radius: 50%; background: #b5a0a1; }
  .app { width: 66px; height: 66px; }
  .sep { width: 2px; height: 76px; margin: -2px 8px 0; flex: none; background: rgba(255, 255, 255, .28); }
  .sep ~ .sep { margin: -2px 5px 0 10px; }
  .wheel { width: 58px; height: 34px; border-radius: 0 0 12px 12px; background: conic-gradient(from 0deg at 50% 55%, #f0684e, #ea5a66 60deg, #d979e8 110deg, #8fb0f6 150deg, #7be6d0 190deg, #7be868 235deg, #d6ef58 280deg, #f8ee58 320deg, #f0684e); }
</style>
